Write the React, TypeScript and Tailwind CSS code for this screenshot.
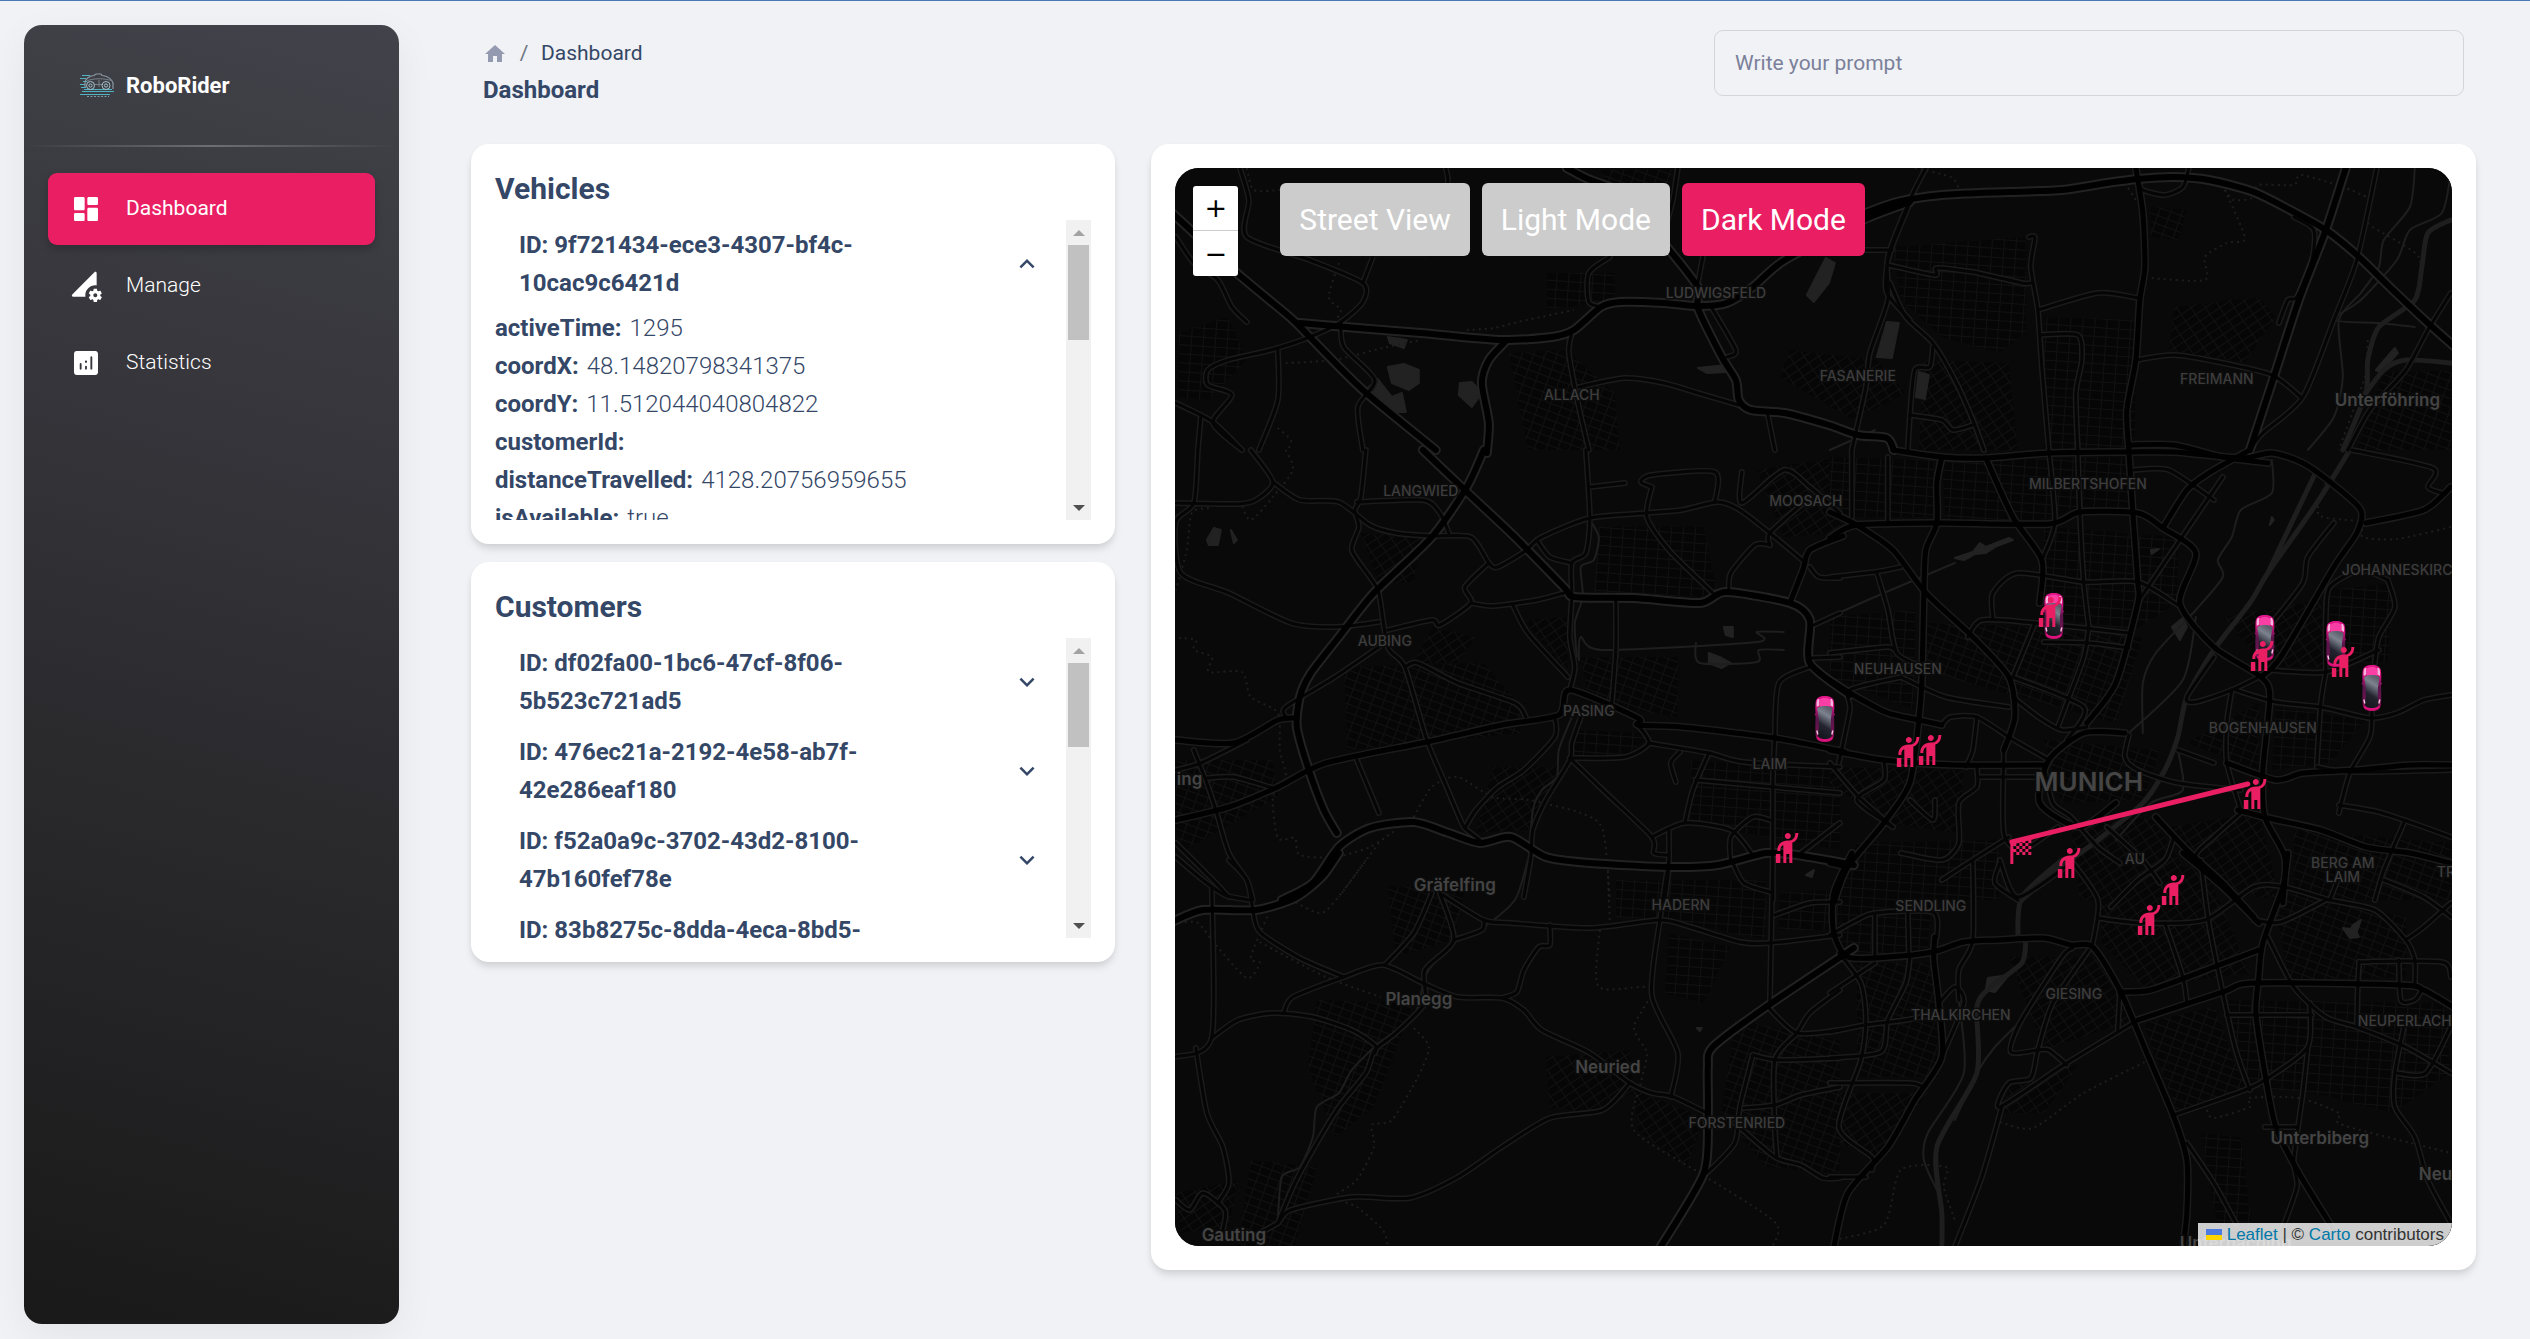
import React, { useState } from "react";
import { MdExpandLess, MdExpandMore, MdHail, MdHome, MdSportsScore } from "react-icons/md";

/* ------------------------------------------------------------------ */
/* Map geometry                                                        */
/* ------------------------------------------------------------------ */

type TileKey = "nw" | "ne" | "w" | "e" | "sw" | "se";
type Line = [TileKey, string];

const TILES: Record<TileKey, { x: number; y: number; kx: number; ky: number }> = {
  nw: { x: 1150, y: 0, kx: 760 / 1568, ky: 1 / 3 },
  ne: { x: 1830, y: 0, kx: 700 / 1568, ky: 1 / 3 },
  w: { x: 1150, y: 450, kx: 690 / 1568, ky: 1 / 3 },
  e: { x: 1830, y: 450, kx: 700 / 1568, ky: 1 / 3 },
  sw: { x: 1150, y: 860, kx: 690 / 1568, ky: 1 / 3 },
  se: { x: 1830, y: 860, kx: 700 / 1568, ky: 1 / 3 },
};

function project([key, points]: Line): number[][] {
  const t = TILES[key];
  return points.split(" ").map((pair) => {
    const [x, y] = pair.split(",").map(Number);
    return [Math.round(t.x + x * t.kx), Math.round(t.y + y * t.ky)];
  });
}

function smooth(line: Line): string {
  const p = project(line);
  let d = `M${p[0][0]} ${p[0][1]}`;
  for (let i = 0; i < p.length - 1; i++) {
    const a = p[Math.max(i - 1, 0)];
    const b = p[i];
    const c = p[i + 1];
    const e = p[Math.min(i + 2, p.length - 1)];
    const k = 8;
    d += `C${b[0] + (c[0] - a[0]) / k} ${b[1] + (c[1] - a[1]) / k} ${c[0] - (e[0] - b[0]) / k} ${
      c[1] - (e[1] - b[1]) / k
    } ${c[0]} ${c[1]}`;
  }
  return d;
}

const MOTORWAYS: Line[] = [
  ["nw", "40,630 90,700 180,820 290,955 330,1010 440,1170 590,1350"],
  ["w", "620,0 718,122 830,260 940,410 965,442 1100,445 1250,460 1310,425 1455,460 1500,510 1500,640 1590,735"],
  ["nw", "310,970 430,985 560,1000 720,1020 830,1010 875,990 930,920 970,905 1060,908 1130,918 1190,910 1245,860 1310,780 1470,660 1568,605"],
  ["ne", "80,640 150,605 250,585 400,575 520,570 620,550 690,538 770,530 850,540 950,575 1040,635 1110,690 1180,765 1260,870 1340,970 1400,1040"],
  ["nw", "735,1022 700,1080 685,1150 700,1270 695,1360"],
  ["w", "760,0 720,110 640,260 510,430 430,560 365,670 340,740 335,830 360,950 395,1080 425,1150"],
  ["w", "300,1350 370,1300 430,1190 500,1135 600,1115 680,1150 750,1180 820,1160 900,1220 1000,1240 1180,1250 1290,1245 1400,1210 1470,1215 1600,1245"],
  ["sw", "50,185 120,150 240,150 330,115 390,50 430,-20"],
  ["sw", "1600,265 1400,440 1280,560 1268,620 1268,760 1260,940 1160,1165"],
  ["nw", "1060,730 1130,860 1130,925 1180,1070 1210,1140 1215,1200 1240,1230 1310,1240 1400,1275 1460,1305 1520,1315 1535,1350"],
  ["ne", "1155,504 1110,690 1050,900 995,1130 940,1350"],
  ["nw", "860,504 900,535 950,560"],
];

const TRUNKS: Line[] = [
  ["w", "1455,460 1485,360 1500,300 1575,258"],
  ["e", "0,265 60,225 250,220 490,222 560,185 690,190 745,235 820,310 785,460 860,590 965,680 985,740 970,960 975,1100 1020,1220 1015,1360"],
  ["e", "140,0 250,20 350,25 490,10 670,5 770,5 920,25 990,10 1060,40 1130,105 1190,180 1180,250 1130,350 1010,620 965,680"],
  ["e", "745,235 800,120 850,70 940,0"],
  ["e", "0,690 60,740 130,790 200,810 250,825"],
  ["e", "250,20 240,100 240,220 215,300 210,430 205,700 200,810 180,1000 120,1120 40,1250 10,1360"],
  ["e", "890,940 1000,990 1060,970 1180,960 1300,945 1392,945"],
  ["e", "0,185 60,225 140,300 215,430 320,560 400,680 415,800 390,900"],
  ["e", "350,25 410,200 475,330 470,460"],
  ["e", "915,1080 980,1105 1100,1140 1200,1190 1300,1210 1392,1240"],
  ["e", "730,1100 800,1200 880,1300 950,1400"],
  ["e", "640,1060 560,1130 470,1060 490,930 570,850 660,850"],
  ["e", "0,900 120,930 280,945 480,945"],
  ["e", "1200,220 1330,180 1392,110"],
  ["e", "0,1240 40,1250"],
  ["se", "50,-20 10,100 10,220 40,290 130,290 230,275 300,245 380,240 480,235 540,255 590,260 650,390 710,580 770,770 800,900 800,1060 790,1165"],
  ["se", "1025,-20 1015,80 970,250 960,350 955,460 975,640 1000,800 1050,940 1130,1110"],
  ["se", "650,395 720,390 860,320 960,270"],
  ["se", "1400,445 1330,390 1280,375 950,370 880,395 690,480"],
  ["se", "235,230 232,300 245,430 250,590 190,720 130,860 40,1000 10,1160"],
  ["se", "790,-20 880,80 960,190"],
  ["w", "60,870 190,880 290,810 335,805"],
  ["w", "60,1110 180,1070 290,1010 400,940 630,875 800,825 930,795 955,720 1110,805 1110,825 1210,830 1420,865 1580,905"],
  ["ne", "685,504 700,640 705,800 695,900 685,1080 665,1230 670,1350"],
  ["e", "670,0 678,190 690,400 690,460 640,700 575,820"],
  ["ne", "670,1335 770,1335 880,1370 980,1390"],
];

const STREETS: Line[] = [
  ["nw", "185,504 205,600 200,710 330,780 440,850 440,905 395,965 330,1010 250,1050 160,1080 120,1110 120,1155 170,1185 130,1270 190,1350"],
  ["nw", "53,710 90,790 140,840 170,920 200,965"],
  ["nw", "460,770 440,850"],
  ["nw", "395,965 400,1040 465,1140 430,1220 440,1350"],
  ["nw", "265,1050 265,1200 225,1350"],
  ["nw", "1090,504 1080,600 1060,700"],
  ["nw", "950,770 905,820 905,905 935,920"],
  ["nw", "870,1000 865,1060 885,1220 905,1350"],
  ["nw", "885,1160 980,1135 1060,1150 1130,1180 1215,1215"],
  ["nw", "1160,925 1210,1050 1190,1070"],
  ["nw", "1140,770 1130,850"],
  ["nw", "1568,610 1530,740 1520,800 1520,880 1568,960"],
  ["nw", "1440,750 1530,750"],
  ["nw", "53,1210 130,1265 190,1350"],
  ["nw", "105,1250 100,1350"],
  ["nw", "1275,1245 1290,1350"],
  ["nw", "610,504 612,555 560,600"],
  ["ne", "215,504 180,600 130,770 130,900 90,1060 80,1160 50,1350"],
  ["ne", "130,795 235,825 240,805 320,815 430,850 450,850"],
  ["ne", "135,850 170,950 230,1030 280,1140 320,1260 345,1350"],
  ["ne", "445,710 460,715 450,800 465,930 475,1100 490,1350"],
  ["ne", "465,930 600,880 690,895"],
  ["ne", "470,1005 555,1005 565,1080 550,1180 555,1350"],
  ["ne", "685,1080 770,1065 870,1085 990,1125 1055,1190"],
  ["ne", "690,545 700,570 750,585 790,560 805,504"],
  ["ne", "1225,504 1180,780 1130,960 1060,1190 970,1300 940,1350"],
  ["ne", "1040,650 1085,690 1080,780 1045,890 1025,900 1005,970"],
  ["ne", "230,1040 225,1100 190,1110 180,1250 175,1350"],
  ["ne", "180,1245 250,1260 275,1290 320,1275"],
  ["ne", "1392,880 1340,990 1290,1110 1210,1230 1160,1350"],
  ["w", "230,0 280,95 240,150 200,162 60,160"],
  ["w", "280,95 340,150 430,155 500,225 560,250 640,258 730,260 770,340 790,350 850,305 890,260 1000,205 1130,190 1210,180 1290,155 1340,180 1420,260 1490,340"],
  ["w", "110,0 100,160 60,215 70,370 180,430 320,520 420,530 520,515"],
  ["w", "490,0 480,140 465,180 475,230 460,300 500,380 520,430 540,590 580,650 630,870 670,1000 710,1120 720,1140 760,1180"],
  ["w", "470,155 620,150 660,190 680,250"],
  ["w", "540,540 640,510 660,525 730,460 715,410 770,340"],
  ["w", "730,460 780,467 880,450 940,430"],
  ["w", "990,0 1000,200 990,310 960,340 960,440 955,560 965,650 955,720"],
  ["w", "880,270 910,320 960,340"],
  ["w", "1000,110 1080,98"],
  ["w", "1140,110 1115,95 1140,75 1285,65 1285,155"],
  ["w", "1140,110 1130,200 1180,300 1280,430"],
  ["w", "1345,65 1345,160 1440,60 1500,110 1568,190"],
  ["w", "1410,285 1375,285 1320,370 1315,425"],
  ["w", "1480,165 1410,250 1410,285"],
  ["w", "825,465 860,550 950,680"],
  ["w", "1060,445 1060,600 1050,760"],
  ["w", "580,650 610,640 700,700 830,760 855,800"],
  ["w", "520,590 420,680 310,770 310,800"],
  ["w", "470,930 520,1090"],
  ["w", "100,900 130,1000 150,1080 180,1210 220,1290 235,1350"],
  ["w", "130,985 190,980 280,1015"],
  ["w", "60,960 115,940 220,870"],
  ["w", "920,800 920,860 850,960 790,1010 740,1080 715,1135"],
  ["w", "980,800 960,880 955,930 900,1050 870,1140 865,1220 850,1340"],
  ["w", "955,925 1080,920 1135,880 1110,825"],
  ["w", "1135,880 1270,910 1350,935 1568,950"],
  ["w", "955,925 1030,1020 1140,1160 1145,1210 1180,1215"],
  ["w", "1140,1160 1215,1120 1320,1140 1370,1215"],
  ["w", "1270,910 1235,1020 1215,1120"],
  ["w", "1205,905 1185,940 1195,995"],
  ["w", "1240,990 1568,1030"],
  ["w", "1420,865 1415,1000 1415,1350"],
  ["w", "1500,650 1430,700 1420,865"],
  ["w", "1180,1140 1180,1250 1170,1350"],
  ["w", "1320,1240 1320,1160 1370,1100 1410,1110"],
  ["w", "1325,1240 1350,1300 1410,1325"],
  ["w", "60,1180 150,1300 180,1340"],
  ["w", "1480,1210 1568,1120"],
  ["w", "1500,350 1520,380 1568,385"],
  ["w", "1510,525 1568,490"],
  ["w", "1505,625 1568,622"],
  ["e", "50,0 50,200"],
  ["e", "130,20 130,215"],
  ["e", "490,0 505,215 475,330"],
  ["e", "555,0 560,190 570,400 580,530"],
  ["e", "1430,0 1430,60"],
  ["e", "0,380 100,365 160,350"],
  ["e", "105,370 130,480 150,610 210,650"],
  ["e", "0,610 130,590 150,610"],
  ["e", "365,505 365,430 420,370 570,395 690,395 780,465"],
  ["e", "310,560 340,510 460,520 670,550"],
  ["e", "460,520 410,680"],
  ["e", "580,530 570,620 530,760 510,830"],
  ["e", "480,575 580,580 670,595"],
  ["e", "160,680 45,720 45,780 20,940"],
  ["e", "160,680 260,740 400,770"],
  ["e", "410,680 570,770 530,870"],
  ["e", "410,740 470,805 520,840 575,830"],
  ["e", "250,825 270,800 330,800 400,860 490,930"],
  ["e", "330,800 320,900 305,950"],
  ["e", "335,980 480,980"],
  ["e", "330,950 330,1010 290,1060 290,1180 250,1230 160,1210"],
  ["e", "120,930 120,990 60,1050 140,1130"],
  ["e", "0,940 65,1040 140,1130"],
  ["e", "235,1050 230,1110 180,1050"],
  ["e", "390,900 390,1150 430,1200 510,1130"],
  ["e", "480,945 500,1060 540,1100 600,1190 650,1240"],
  ["e", "670,855 660,920 690,960 780,1000 920,1020"],
  ["e", "690,455 780,280 880,80"],
  ["e", "680,60 760,60 860,150"],
  ["e", "780,900 860,940"],
  ["e", "860,620 800,740 820,755 900,720 960,680"],
  ["e", "900,720 890,820 890,940 920,1080"],
  ["e", "910,720 1000,755 1100,770 1210,805 1270,790 1330,750 1392,735"],
  ["e", "985,660 1110,665 1230,600"],
  ["e", "1110,665 1100,760 1090,940"],
  ["e", "1130,220 1070,320 1060,400 990,520"],
  ["e", "1250,390 1265,470 1230,560 1220,640"],
  ["e", "1250,390 1190,360 1120,410 1110,500 1110,665"],
  ["e", "1215,785 1210,860 1165,970 1140,1090"],
  ["e", "1392,960 1170,965 1090,950"],
  ["e", "1170,0 1350,55 1340,110 1370,130"],
  ["e", "920,1090 860,1160 820,1220 880,1300"],
  ["e", "1140,1065 1230,1085 1330,1130 1392,1160"],
  ["e", "1285,1120 1240,1260 1220,1350"],
  ["e", "770,1160 750,1230 690,1290 630,1370"],
  ["e", "620,1130 700,1230 740,1300"],
  ["e", "380,1240 370,1300 420,1350"],
  ["e", "250,1290 310,1240 400,1160"],
  ["se", "0,225 60,180 100,160 230,155 240,230"],
  ["se", "100,165 100,290"],
  ["se", "175,155 178,285"],
  ["se", "320,0 320,240 290,330 290,420"],
  ["se", "20,280 70,370 80,480 70,600 20,800 95,890 95,930"],
  ["se", "0,400 100,310"],
  ["se", "180,290 170,370 130,480 115,575 0,595"],
  ["se", "0,515 80,495 170,480 250,460"],
  ["se", "0,670 180,670 210,685"],
  ["se", "0,950 80,950"],
  ["se", "245,430 280,380 300,430 250,590"],
  ["se", "380,0 420,110 540,10"],
  ["se", "540,0 600,120 590,250"],
  ["se", "600,175 700,190 840,180 950,80 1020,80 1120,120 1220,150 1290,240 1310,300 1310,380"],
  ["se", "750,190 790,350 800,430"],
  ["se", "830,0 850,190 880,400 910,570 940,690"],
  ["se", "950,180 1010,185 1110,120"],
  ["se", "980,230 1040,380 1110,470 1180,500 1290,560 1392,640"],
  ["se", "890,465 1080,465"],
  ["se", "1180,500 1185,320 1200,305 1370,305 1392,350"],
  ["se", "1275,300 1280,420 1310,420 1325,390"],
  ["se", "1290,240 1330,200 1392,130"],
  ["se", "1240,60 1330,110 1392,170"],
  ["se", "1140,50 1120,120"],
  ["se", "1075,430 1070,560 985,650 930,690 770,765"],
  ["se", "1070,560 1060,700 1040,900 1045,980 1010,1120"],
  ["se", "975,800 1045,800"],
  ["se", "1285,500 1265,640 1265,740 1310,830 1340,960 1392,1090"],
  ["se", "1270,640 1335,640 1392,500"],
  ["se", "690,480 530,610 380,740 400,670 450,655 465,570 500,430 580,270"],
  ["se", "465,570 405,575 425,490 520,290 545,265"],
  ["se", "465,570 490,570 530,615"],
  ["se", "650,400 645,510"],
  ["se", "385,740 340,950 280,1160"],
  ["se", "800,850 860,970 910,1090"],
  ["sw", "140,80 140,530 60,590"],
  ["sw", "140,535 200,480 280,458 370,470 460,510 512,555 512,580"],
  ["sw", "105,565 130,760 165,860 180,970 155,1030"],
  ["sw", "305,460 325,410 440,350 530,315 620,370 700,410 800,415 850,450 890,510 1000,580 1090,670 1140,700 1190,710 1265,760"],
  ["sw", "235,150 250,215 340,295 440,350"],
  ["sw", "180,0 220,60 235,150"],
  ["sw", "660,100 690,240 625,330 625,430 560,520 512,570 490,640 430,740 380,850 330,970 290,1090"],
  ["sw", "640,100 600,220 535,315"],
  ["sw", "665,105 760,180 820,190 1000,205 1160,180 1230,200 1340,245 1410,250 1568,225"],
  ["sw", "910,195 910,255 885,260 850,330 835,395 800,415"],
  ["sw", "760,180 755,210 690,240"],
  ["sw", "1180,0 1160,180 1140,405 1200,580 1185,710"],
  ["sw", "1415,0 1410,430"],
  ["sw", "1405,440 1470,520 1568,510"],
  ["sw", "1568,390 1500,460 1470,520 1420,600 1420,800 1425,890"],
  ["sw", "1370,585 1430,600 1568,595"],
  ["sw", "1370,585 1340,740 1330,850 1265,940"],
  ["sw", "1350,745 1420,735 1480,705 1568,680"],
  ["sw", "1330,790 1420,890 1480,915 1530,955 1568,955"],
  ["sw", "1420,165 1500,130 1568,125"],
  ["sw", "1090,670 1030,750 910,775 800,860 700,950 590,1015 460,1010 320,1050 290,1090 250,1120"],
  ["sw", "60,1020 90,1050 120,1000 170,1050 165,1110"],
  ["sw", "60,-10 120,60 170,105 225,120"],
];

const RIVERS: Line[] = [
  ["e", "1165,0 1090,160 980,370 940,460 860,600 800,740 780,860 750,960 700,1060 600,1170 500,1270 430,1350"],
  ["e", "1090,60 1020,260 980,370"],
  ["ne", "1392,660 1340,700 1325,800 1310,900 1230,980 1205,1080 1200,1180 1150,1350"],
  ["ne", "1392,1090 1290,1080 1240,1110 1190,1200"],
  ["se", "520,0 430,110 420,230"],
  ["se", "440,240 430,310 360,380 330,440 330,640 240,860 250,1060 250,1160"],
];

const STREAMS: Line[] = [
  ["ne", "1310,504 1300,620 1240,720 1230,800 1190,880 1140,960 1150,1130 1130,1250 1070,1350"],
  ["ne", "1392,520 1370,640 1300,690 1270,780 1190,900 1130,960 1230,970 1310,980"],
  ["e", "990,30 990,130 920,180 900,260 870,330 880,380 820,480 730,610 700,700 700,850"],
  ["e", "780,900 790,1020 720,1060 640,1170"],
  ["e", "820,500 790,690 670,850"],
  ["w", "1000,210 1020,260 1010,330 980,350 985,440 965,520 970,620"],
  ["w", "975,630 980,560 1030,600 1380,575 1380,545 1440,545"],
  ["w", "1240,580 1250,640 1380,635 1385,600 1440,600"],
  ["w", "960,800 930,900 925,980 890,1020 870,1080 860,1250 850,1340"],
  ["sw", "860,0 830,120 750,210 690,250 630,340 600,470 520,550 460,630 430,700 380,740 370,830 340,920 300,950 290,1080"],
  ["se", "290,420 300,640 220,820 210,900 240,990"],
  ["se", "430,480 370,560 330,640 280,780"],
  ["ne", "0,1350 100,1290"],
  ["e", "0,500 120,430 280,340"],
];

const BORDERS: Line[] = [
  ["nw", "200,504 215,570 268,570"],
  ["nw", "390,790 370,890 395,930 380,970"],
  ["nw", "280,1090 380,1080 480,1045 560,1020"],
  ["nw", "655,990 710,985 760,965 875,930"],
  ["nw", "265,1285 290,1320 285,1350"],
  ["ne", "660,550 685,600"],
  ["ne", "885,570 930,715 890,730 840,770 840,840 715,835"],
  ["ne", "885,570 905,600 945,595 960,555 1040,555 1060,525 1200,590 1205,670 1320,770 1310,900"],
  ["ne", "1205,1020 1200,1120 1180,1200 1140,1350"],
  ["ne", "190,504 270,530 290,565"],
  ["e", "1110,100 1095,195 1190,215 1195,260 1270,268 1392,232"],
  ["w", "310,0 325,60 280,140 230,210 210,165"],
  ["w", "135,175 95,190 85,300 60,420"],
  ["w", "65,565 105,570 100,600 140,620 135,665 210,665 230,740 290,790 295,900 310,980 280,1040 290,1165 330,1165 340,1215 420,1220 500,1190 560,1140"],
  ["w", "600,1100 640,1010 700,980 780,1040 860,1050 980,1090 1030,1140 1045,1350"],
  ["w", "520,1180 430,1340"],
  ["sw", "490,0 440,90 390,158 330,125"],
  ["sw", "65,190 110,190 150,255 220,355 250,310 230,290 270,160"],
  ["sw", "250,245 400,350 525,410"],
  ["sw", "600,505 635,560 610,650 550,780 505,795 510,860 470,960 420,1010 470,1040 530,1110 540,1157"],
  ["sw", "1040,30 1045,195"],
  ["sw", "1022,210 1020,380 1140,385 1100,500 1130,580 1115,670 1100,810 1250,940 1420,1085 1415,1157"],
  ["se", "380,785 455,805 570,700 705,605"],
  ["se", "845,750 860,775 940,740 940,715 1050,715 1140,760 1150,795 1392,880"],
  ["se", "10,1140 120,1095 160,930 260,920 255,980 280,1080"],
];

const LAKES: Line[] = [
  ["nw", "492,1100 525,1093 555,1110 555,1150 535,1170 520,1162 500,1150"],
  ["nw", "470,1138 500,1190 520,1180 528,1235 500,1235 450,1165"],
  ["nw", "640,1150 665,1145 685,1180 665,1220 638,1185"],
  ["nw", "490,1012 530,1020 525,1045 495,1030"],
  ["nw", "1395,775 1413,790 1400,850 1370,905 1355,885"],
  ["nw", "1520,965 1545,970 1530,1075 1500,1070"],
  ["nw", "1130,1105 1190,1095 1190,1115 1150,1118"],
  ["ne", "200,1115 222,1125 213,1198 192,1190"],
  ["ne", "1222,1110 1265,1045 1272,1060 1235,1115"],
  ["w", "130,270 145,235 162,240 155,285 135,285"],
  ["w", "185,240 198,270 190,280"],
  ["w", "1305,530 1325,530 1325,560 1310,555"],
  ["w", "1270,610 1300,625 1320,640 1300,655 1270,640"],
  ["e", "280,325 320,305 335,280 350,290 400,265 410,270 375,288 350,308 325,312 300,330"],
  ["e", "765,530 790,505 800,530 785,570"],
  ["e", "720,300 738,298 722,312"],
  ["e", "990,200 995,210 985,225"],
  ["se", "1150,205 1168,208 1172,195 1190,180 1180,215 1185,230 1165,235"],
  ["se", "355,355 400,345 370,395 350,390"],
  ["sw", "1490,45 1510,30 1505,52"],
  ["sw", "1242,505 1255,503 1250,513"],
];

type Block = [TileKey, string, number];
const BLOCKS: Block[] = [
  ["nw", "60,1000 160,950 200,1080 120,1200 60,1190", 0],
  ["nw", "740,1060 860,1050 960,1180 970,1350 780,1350", 1],
  ["nw", "820,820 960,820 960,900 820,930", 0],
  ["nw", "930,510 1080,510 1060,620 960,600", 1],
  ["nw", "1320,1050 1500,1080 1560,1180 1450,1260 1300,1130", 2],
  ["ne", "140,740 440,710 440,1000 380,1060 250,1010 160,900", 0],
  ["ne", "720,620 800,630 780,720 720,710", 1],
  ["ne", "480,950 690,960 680,1350 480,1350", 0],
  ["ne", "770,920 960,890 1000,950 930,1090 760,1050", 2],
  ["ne", "210,1080 400,1090 420,1350 200,1350", 2],
  ["ne", "1240,1120 1392,1110 1392,1350 1180,1350", 1],
  ["w", "480,250 620,260 600,400 520,400", 2],
  ["w", "440,650 760,640 850,780 840,850 450,900", 1],
  ["w", "640,530 740,560 700,640 600,640", 2],
  ["w", "1020,230 1260,230 1290,440 1010,430", 0],
  ["w", "850,510 950,500 950,670", 2],
  ["w", "980,620 1200,620 1200,800 1000,760", 1],
  ["w", "60,930 280,930 290,1040 80,1200 60,1150", 1],
  ["w", "780,950 930,950 860,1140 740,1150", 2],
  ["w", "1230,930 1568,960 1568,1200 1230,1120", 0],
  ["w", "960,840 1140,850 1080,920 960,920", 0],
  ["w", "1380,60 1568,20 1568,250 1440,260", 2],
  ["e", "0,20 230,30 230,200 0,200", 0],
  ["e", "250,30 660,20 680,180 540,180 470,210 260,210", 0],
  ["e", "480,230 780,260 780,460 680,540 480,500", 0],
  ["e", "220,520 460,530 420,740 210,660", 1],
  ["e", "420,540 700,560 640,820 430,740", 1],
  ["e", "0,500 190,480 190,780 0,680", 0],
  ["e", "0,950 300,960 290,1150 120,1120 0,1000", 2],
  ["e", "480,870 740,900 700,1050 520,1060", 1],
  ["e", "880,500 1100,450 1110,650 980,650", 2],
  ["e", "1120,420 1260,400 1250,640 1120,640", 0],
  ["e", "800,880 960,760 960,960", 1],
  ["e", "1000,770 1200,810 1120,940 990,960", 0],
  ["e", "60,1180 380,1170 380,1350 20,1350", 0],
  ["e", "540,1130 720,1100 840,1350 560,1350", 2],
  ["e", "760,1130 960,1090 1010,1350 900,1330", 2],
  ["e", "1040,1140 1392,1180 1392,1350 1040,1350", 1],
  ["se", "20,20 230,20 220,280 30,280", 0],
  ["se", "600,20 840,20 940,340 700,380 610,250", 2],
  ["se", "400,290 620,290 680,480 480,570", 2],
  ["se", "990,100 1290,170 1290,350 1030,360", 1],
  ["se", "880,420 1380,430 1392,640 1260,760 1080,700 940,680", 0],
  ["se", "700,490 860,440 930,680 780,760", 1],
  ["se", "60,310 240,310 240,650 60,650", 1],
  ["se", "20,700 220,700 100,890 20,850", 2],
  ["se", "400,680 560,610 480,760 390,760", 2],
  ["se", "830,820 920,830 950,1150 870,1100", 0],
  ["sw", "540,80 720,60 690,240 560,290", 1],
  ["sw", "380,420 600,430 510,740 420,830 360,620", 1],
  ["sw", "900,590 1090,570 1100,700 1000,760 910,740", 2],
  ["sw", "1060,60 1400,60 1400,240 1180,180 1060,170", 0],
  ["sw", "1180,220 1320,260 1260,430 1170,400", 0],
  ["sw", "1330,480 1568,540 1568,940 1400,920 1300,760", 1],
  ["sw", "230,900 380,920 330,1157 200,1157", 1],
  ["sw", "60,1000 200,960 180,1100 70,1120", 2],
  ["sw", "1100,690 1260,770 1220,920 1110,810", 2],
  ["sw", "1430,100 1568,90 1568,210 1430,210", 0],
];

type Label = { text: string; x: number; y: number; kind: "district" | "town" | "city"; start?: boolean };
const LABELS: Label[] = [
  { text: "LOCHHAUSEN", x: 1378, y: 250, kind: "district" },
  { text: "LUDWIGSFELD", x: 1716, y: 292, kind: "district" },
  { text: "FASANERIE", x: 1858, y: 375, kind: "district" },
  { text: "ALLACH", x: 1572, y: 394, kind: "district" },
  { text: "FREIMANN", x: 2217, y: 378, kind: "district" },
  { text: "Unterföhring", x: 2335, y: 400, kind: "town", start: true },
  { text: "LANGWIED", x: 1421, y: 490, kind: "district" },
  { text: "MOOSACH", x: 1806, y: 500, kind: "district" },
  { text: "MILBERTSHOFEN", x: 2088, y: 483, kind: "district" },
  { text: "JOHANNESKIRCHEN", x: 2342, y: 569, kind: "district", start: true },
  { text: "AUBING", x: 1385, y: 640, kind: "district" },
  { text: "NEUHAUSEN", x: 1898, y: 668, kind: "district" },
  { text: "PASING", x: 1589, y: 710, kind: "district" },
  { text: "BOGENHAUSEN", x: 2263, y: 727, kind: "district" },
  { text: "LAIM", x: 1770, y: 763, kind: "district" },
  { text: "ing", x: 1177, y: 779, kind: "town", start: true },
  { text: "MUNICH", x: 2089, y: 781, kind: "city" },
  { text: "AU", x: 2135, y: 858, kind: "district" },
  { text: "BERG AM", x: 2343, y: 862, kind: "district" },
  { text: "LAIM", x: 2343, y: 876, kind: "district" },
  { text: "TRUDERING", x: 2437, y: 871, kind: "district", start: true },
  { text: "Gräfelfing", x: 1455, y: 885, kind: "town" },
  { text: "HADERN", x: 1681, y: 904, kind: "district" },
  { text: "SENDLING", x: 1931, y: 905, kind: "district" },
  { text: "GIESING", x: 2074, y: 993, kind: "district" },
  { text: "Planegg", x: 1419, y: 999, kind: "town" },
  { text: "THALKIRCHEN", x: 1961, y: 1014, kind: "district" },
  { text: "NEUPERLACH", x: 2358, y: 1020, kind: "district", start: true },
  { text: "Neuried", x: 1608, y: 1067, kind: "town" },
  { text: "FORSTENRIED", x: 1737, y: 1122, kind: "district" },
  { text: "Unterbiberg", x: 2320, y: 1138, kind: "town" },
  { text: "Neubiberg", x: 2419, y: 1174, kind: "town", start: true },
  { text: "Gauting", x: 1234, y: 1235, kind: "town" },
  { text: "Unterhaching", x: 2180, y: 1243, kind: "town", start: true },
];

const LABEL_STYLE = {
  district: "fill-[#3d3d3d] text-[14px] font-medium",
  town: "fill-[#444444] text-[17px] font-semibold",
  city: "fill-[#454545] text-[26px] font-semibold",
};

const CARS = [
  [2054, 616],
  [2265, 638],
  [2336, 644],
  [2372, 688],
  [1825, 719],
];

const PEOPLE = [
  [2033, 594],
  [2245, 638],
  [2326, 644],
  [2238, 776],
  [1891, 734],
  [1913, 732],
  [1770, 830],
  [2052, 845],
  [2132, 902],
  [2156, 872],
];

function Car({ x, y }: { x: number; y: number }) {
  return (
    <g transform={`translate(${x - 11} ${y - 23})`}>
      <path d="M1 18.500h2M19 18.500h2" stroke="#b3167a" strokeWidth="1.600" />
      <path
        d="M11 0C16 0 19 1.500 20 5c.8 4 .4 9 .2 14 .2 7 .6 15-.2 21-.8 4.500-4 6-9 6s-8.200-1.500-9-6c-.8-6-.4-14-.2-21C1.600 14 1.200 9 2 5 3 1.500 6 0 11 0z"
        fill="url(#carBody)"
      />
      <path d="M4 3C2.500 5 2.500 8 3 11L5.500 9.500V3zM18 3c1.500 2 1.500 5 1 8l-2.500-1.500V3z" fill="#f6b6dc" />
      <path d="M11 2c4 0 5.500 1 5.500 4l-.5 5H6l-.5-5C5.500 3 7 2 11 2z" fill="#f93fa6" />
      <path d="M11 10c5 0 7.600 1.400 7.600 3L17 23v9l1 7c-.5 3-3 4-7 4s-6.500-1-7-4l1-7v-9L3.400 13c0-1.600 2.600-3 7.600-3z" fill="url(#carGlass)" />
      <path d="M3 34.500l1 4M19 34.500l-1 4" stroke="#f7c4e2" strokeWidth="1.400" />
      <path d="M3.500 41.500C6 45 16 45 18.500 41.500" fill="none" stroke="#e0127f" strokeWidth="2" />
    </g>
  );
}

function CityMap() {
  return (
    <svg
      className="absolute inset-0 h-full w-full"
      viewBox="1175 168 1277 1078"
      preserveAspectRatio="xMidYMid slice"
      role="img"
      aria-label="Map of Munich"
    >
      <defs>
        <pattern id="block0" width="12" height="9" patternUnits="userSpaceOnUse" patternTransform="rotate(4)">
          <rect width="12" height="9" fill="#060606" />
          <path d="M0 .5H12M.5 0V9" stroke="#111111" />
        </pattern>
        <pattern id="block1" width="11" height="8" patternUnits="userSpaceOnUse" patternTransform="rotate(20)">
          <rect width="11" height="8" fill="#060606" />
          <path d="M0 .5H11M.5 0V8" stroke="#111111" />
        </pattern>
        <pattern id="block2" width="12" height="8" patternUnits="userSpaceOnUse" patternTransform="rotate(-34)">
          <rect width="12" height="8" fill="#060606" />
          <path d="M0 .5H12M.5 0V8" stroke="#111111" />
        </pattern>
        <linearGradient id="carBody" x1="0" y1="0" x2="0" y2="1">
          <stop offset="0" stopColor="#e3178b" />
          <stop offset=".25" stopColor="#d0107c" />
          <stop offset=".5" stopColor="#57164a" />
          <stop offset=".8" stopColor="#6d1250" />
          <stop offset="1" stopColor="#c40e6c" />
        </linearGradient>
        <linearGradient id="carGlass" x1=".3" y1="1" x2=".6" y2="0">
          <stop offset="0" stopColor="#14141c" />
          <stop offset=".4" stopColor="#23242f" />
          <stop offset=".75" stopColor="#7d828f" />
          <stop offset="1" stopColor="#5a5d6a" />
        </linearGradient>
      </defs>
      <rect x="1175" y="168" width="1277" height="1078" fill="#090909" />
      <g>
        {BLOCKS.map(([key, points, kind], i) => (
          <polygon
            key={i}
            points={project([key, points]).join(" ")}
            fill={kind === 0 ? "url(#block0)" : kind === 1 ? "url(#block1)" : "url(#block2)"}
          />
        ))}
      </g>
      <g fill="#222222" stroke="#222222" strokeWidth="2" strokeLinejoin="round">
        {LAKES.map((l, i) => (
          <polygon key={i} points={project(l).join(" ")} />
        ))}
      </g>
      <g fill="none" stroke="#1e1e1e" strokeLinecap="round" strokeLinejoin="round">
        {RIVERS.map((l, i) => (
          <path key={i} d={smooth(l)} strokeWidth="5" />
        ))}
        {STREAMS.map((l, i) => (
          <path key={i} d={smooth(l)} strokeWidth="2" />
        ))}
        {BORDERS.map((l, i) => (
          <path key={i} d={smooth(l)} strokeWidth="2" strokeDasharray="2 4" strokeLinecap="butt" />
        ))}
      </g>
      <g fill="none" strokeLinecap="round" strokeLinejoin="round">
        {STREETS.map((l, i) => (
          <path key={i} d={smooth(l)} stroke="#1b1b1b" strokeWidth="6" />
        ))}
        {TRUNKS.map((l, i) => (
          <path key={i} d={smooth(l)} stroke="#1b1b1b" strokeWidth="8" />
        ))}
        {MOTORWAYS.map((l, i) => (
          <path key={i} d={smooth(l)} stroke="#222222" strokeWidth="10" />
        ))}
        {STREETS.map((l, i) => (
          <path key={i} d={smooth(l)} stroke="#050505" strokeWidth="3" />
        ))}
        {TRUNKS.map((l, i) => (
          <path key={i} d={smooth(l)} stroke="#010101" strokeWidth="5" />
        ))}
        {MOTORWAYS.map((l, i) => (
          <path key={i} d={smooth(l)} stroke="#010101" strokeWidth="6" />
        ))}
      </g>
      <g className="font-['Inter',sans-serif]" dominantBaseline="central">
        {LABELS.map((l, i) => (
          <text
            key={i}
            x={l.x}
            y={l.y}
            textAnchor={l.start ? "start" : "middle"}
            className={LABEL_STYLE[l.kind]}
            stroke="#0c0c0c"
            strokeWidth="3"
            paintOrder="stroke"
          >
            {l.text}
          </text>
        ))}
      </g>
      {CARS.map(([x, y]) => (
        <Car key={x} x={x} y={y} />
      ))}
      <path d="M2012 842L2248 784" stroke="#e91e63" strokeWidth="5" strokeLinecap="round" />
      {PEOPLE.map(([x, y]) => (
        <MdHail key={x} x={x} y={y} size={36} color="#e91e63" />
      ))}
      <MdSportsScore x={2003} y={834} size={36} color="#e91e63" />
    </svg>
  );
}

/* ------------------------------------------------------------------ */
/* Icons                                                               */
/* ------------------------------------------------------------------ */

function DashboardIcon() {
  return (
    <svg viewBox="0 0 24 24" className="size-8" fill="currentColor" aria-hidden="true">
      <path d="M4 13h6c.55 0 1-.45 1-1V4c0-.55-.45-1-1-1H4c-.55 0-1 .45-1 1v8c0 .55.45 1 1 1zm0 8h6c.55 0 1-.45 1-1v-4c0-.55-.45-1-1-1H4c-.55 0-1 .45-1 1v4c0 .55.45 1 1 1zm10 0h6c.55 0 1-.45 1-1v-8c0-.55-.45-1-1-1h-6c-.55 0-1 .45-1 1v8c0 .55.45 1 1 1zM13 4v4c0 .55.45 1 1 1h6c.55 0 1-.45 1-1V4c0-.55-.45-1-1-1h-6c-.55 0-1 .45-1 1z" />
    </svg>
  );
}

function ManageIcon() {
  return (
    <svg viewBox="0 0 24 24" className="size-8" fill="currentColor" aria-hidden="true">
      <path d="M18.990 11.500c.34 0 .67.03 1 .07V2.410c0-.89-1.080-1.340-1.710-.71L1.700 18.290c-.63.63-.19 1.710.7 1.710h9.160c-.04-.33-.07-.66-.07-1 0-4.140 3.360-7.500 7.500-7.500zm3.710 7.990c.02-.16.04-.32.04-.49s-.01-.33-.04-.49l1.060-.83c.09-.08.12-.21.06-.32l-1-1.730c-.06-.11-.19-.15-.31-.11l-1.240.5c-.26-.2-.54-.37-.85-.49l-.19-1.320c-.01-.12-.12-.21-.24-.21h-2c-.12 0-.23.09-.25.21l-.19 1.320c-.3.13-.59.29-.85.49l-1.240-.5c-.11-.04-.24 0-.31.11l-1 1.730c-.06.11-.04.24.06.32l1.060.83c-.02.16-.03.32-.03.49s.01.33.03.49l-1.060.83c-.09.08-.12.21-.06.32l1 1.730c.06.11.19.15.31.11l1.240-.5c.26.2.54.37.85.49l.19 1.320c.02.12.12.21.25.21h2c.12 0 .23-.09.24-.21l.19-1.320c.3-.13.59-.29.84-.49l1.250.5c.11.04.24 0 .31-.11l1-1.730c.06-.11.03-.24-.06-.32l-1.060-.83zm-3.710 1.010c-.83 0-1.500-.67-1.500-1.500s.67-1.500 1.500-1.500 1.500.67 1.500 1.500-.67 1.500-1.500 1.500z" />
    </svg>
  );
}

function StatisticsIcon() {
  return (
    <svg viewBox="0 0 24 24" className="size-8" fill="currentColor" aria-hidden="true">
      <path
        fillRule="evenodd"
        d="M19 3H5c-1.100 0-2 .9-2 2v14c0 1.100.9 2 2 2h14c1.100 0 2-.9 2-2V5c0-1.100-.9-2-2-2zM8 17c-.4 0-.7-.3-.7-.7v-3.600c0-.4.3-.7.7-.7s.7.300.7.700v3.600c0 .4-.3.700-.7.700zm4 0c-.4 0-.7-.3-.7-.7v-1.600c0-.4.3-.7.7-.7s.7.300.7.700v1.600c0 .4-.3.700-.7.700zm0-5c-.5 0-.8-.4-.8-.9s.3-.9.8-.9.8.400.8.900-.3.900-.8.900zm4 5c-.4 0-.7-.3-.7-.7V7.700c0-.4.3-.7.7-.7s.7.300.7.700v8.600c0 .4-.3.700-.7.700z"
      />
    </svg>
  );
}

function Logo() {
  return (
    <svg viewBox="0 0 34 24" className="h-6 w-[34px]" fill="none" aria-hidden="true">
      <g stroke="#4fb3c4" strokeWidth="1">
        <path d="M2 2.500h8M0 5.500h6M3 8.500h4M0 11.500h5M1 14.500h5M2 18.500h32M0 21.500h30M4 16.500h28" />
      </g>
      <path d="M5 14V10C5 6 9 3 14 2.500l2-1.500h5l1 1.500c6 .5 10 4 11 7.500v6" stroke="#8d9aa3" strokeWidth="1.200" />
      <path d="M7 8c5-3 19-3 25 0M14 11.500h9M19 7v7" stroke="#76828b" />
      <g stroke="#a3c3cb">
        <circle cx="10.500" cy="12.500" r="4" />
        <circle cx="10.500" cy="12.500" r="1.600" />
        <circle cx="26" cy="12.500" r="4" />
        <circle cx="26" cy="12.500" r="1.600" />
      </g>
      <path d="M7 23.500h22" stroke="#7c98a3" strokeDasharray="2 1.500" />
    </svg>
  );
}

/* ------------------------------------------------------------------ */
/* Sidebar                                                             */
/* ------------------------------------------------------------------ */

const NAV = [
  { label: "Dashboard", icon: DashboardIcon },
  { label: "Manage", icon: ManageIcon },
  { label: "Statistics", icon: StatisticsIcon },
];

function Sidebar() {
  return (
    <aside className="m-6 mr-0 h-[calc(100vh-40px)] w-[375px] shrink-0 rounded-[18px] bg-[linear-gradient(195deg,#42424a,#191919)] text-white shadow-[0_12px_40px_rgba(0,0,0,0.06)]">
      <a href="#home" className="flex h-[120px] items-center gap-3 pl-14 text-[22px] font-bold">
        <Logo />
        RoboRider
      </a>
      <div className="h-[2px] bg-linear-to-r from-transparent via-white/25 to-transparent" />
      <nav className="flex flex-col gap-[5px] px-6 pt-[26px]">
        {NAV.map(({ label, icon: Icon }, i) => (
          <a
            key={label}
            href={`#${label.toLowerCase()}`}
            aria-current={i === 0 ? "page" : undefined}
            className={
              i === 0
                ? "flex h-[72px] items-center gap-6 rounded-[9px] bg-[#e91e63] pl-[22px] text-[21px] shadow-[0_4px_8px_rgba(0,0,0,0.2)]"
                : "flex h-[72px] items-center gap-6 rounded-[9px] pl-[22px] text-[21px] font-light"
            }
          >
            <Icon />
            {label}
          </a>
        ))}
      </nav>
    </aside>
  );
}

/* ------------------------------------------------------------------ */
/* Lists                                                               */
/* ------------------------------------------------------------------ */

type Item = { id: string; details?: [string, string][] };

const VEHICLES: Item[] = [
  {
    id: "9f721434-ece3-4307-bf4c-10cac9c6421d",
    details: [
      ["activeTime", "1295"],
      ["coordX", "48.14820798341375"],
      ["coordY", "11.512044040804822"],
      ["customerId", ""],
      ["distanceTravelled", "4128.20756959655"],
      ["isAvailable", "true"],
    ],
  },
];

const CUSTOMERS: Item[] = [
  { id: "df02fa00-1bc6-47cf-8f06-5b523c721ad5" },
  { id: "476ec21a-2192-4e58-ab7f-42e286eaf180" },
  { id: "f52a0a9c-3702-43d2-8100-47b160fef78e" },
  { id: "83b8275c-8dda-4eca-8bd5-2f1c7d90a64b" },
];

function ScrollTrack({ thumb }: { thumb: string }) {
  return (
    <div className="flex w-[25px] shrink-0 flex-col items-center bg-[#f1f1f1]" aria-hidden="true">
      <div className="flex h-[25px] items-center">
        <svg viewBox="0 0 12 6" className="h-[6px] w-3 fill-[#a3a3a3]">
          <path d="M6 0l6 6H0z" />
        </svg>
      </div>
      <div className="w-full flex-1 px-[2px]">
        <div className={thumb} />
      </div>
      <div className="flex h-[25px] items-center">
        <svg viewBox="0 0 12 6" className="h-[6px] w-3 fill-[#505050]">
          <path d="M0 0h12L6 6z" />
        </svg>
      </div>
    </div>
  );
}

function ListCard({ title, items, thumb }: { title: string; items: Item[]; thumb: string }) {
  return (
    <section className="rounded-[18px] bg-white p-6 shadow-[0_6px_9px_-1px_rgba(0,0,0,0.1),0_3px_6px_-1px_rgba(0,0,0,0.06)]">
      <h2 className="h-[52px] text-[30px] leading-[42px] font-bold">{title}</h2>
      <div className="flex h-[300px]">
        <div className="min-w-0 flex-1 overflow-hidden">
          {items.map((item) => (
            <div key={item.id}>
              <button
                type="button"
                aria-expanded={Boolean(item.details)}
                className="mb-px flex w-full items-center px-6 py-[6px] text-left text-[24px] leading-[38px] font-bold"
              >
                <span className="min-w-0 flex-1 pr-3">{`ID: ${item.id}`}</span>
                {item.details ? <MdExpandLess size={30} /> : <MdExpandMore size={30} />}
              </button>
              {item.details && (
                <dl className="text-[24px] leading-[38px]">
                  {item.details.map(([key, value]) => (
                    <div key={key} className="flex gap-2">
                      <dt className="font-bold">{`${key}:`}</dt>
                      <dd className="font-light">{value}</dd>
                    </div>
                  ))}
                </dl>
              )}
            </div>
          ))}
        </div>
        <ScrollTrack thumb={thumb} />
      </div>
    </section>
  );
}

/* ------------------------------------------------------------------ */
/* Map card                                                            */
/* ------------------------------------------------------------------ */

const MODES = ["Street View", "Light Mode", "Dark Mode"];

function MapCard() {
  const [mode, setMode] = useState("Dark Mode");
  return (
    <section className="rounded-[18px] bg-white p-6 shadow-[0_6px_9px_-1px_rgba(0,0,0,0.1),0_3px_6px_-1px_rgba(0,0,0,0.06)]">
      <div className="relative h-[calc(100vh-261px)] overflow-hidden rounded-[24px] bg-[#090909]">
        <CityMap />
        <div className="absolute top-[18px] left-[18px] flex w-[45px] flex-col overflow-hidden rounded-[3px] bg-white font-['DejaVu_Sans',sans-serif] text-[27px] leading-[44px] text-black">
          <button type="button" aria-label="Zoom in" className="h-[45px] border-b border-[#cccccc]">
            +
          </button>
          <button type="button" aria-label="Zoom out" className="h-[45px]">
            −
          </button>
        </div>
        <div className="absolute top-[15px] left-[105px] flex gap-3">
          {MODES.map((m) => (
            <button
              key={m}
              type="button"
              onClick={() => setMode(m)}
              className={
                m === mode
                  ? "h-[73px] rounded-[6px] bg-[#e91e63] px-[19px] text-[30px] text-white"
                  : "h-[73px] rounded-[6px] bg-[#cccccc] px-[19px] text-[30px] text-white"
              }
            >
              {m}
            </button>
          ))}
        </div>
        <div className="absolute right-0 bottom-0 flex h-[23px] items-center bg-white/80 px-2 font-['Liberation_Sans',sans-serif] text-[17px] text-[#333333]">
          <svg viewBox="0 0 16 11" className="mr-[5px] h-[11px] w-4" aria-hidden="true">
            <path d="M0 0h16v6H0z" fill="#4c7be1" />
            <path d="M0 6h16v5H0z" fill="#ffd500" />
          </svg>
          <p className="whitespace-nowrap">
            <a href="#leaflet" className="text-[#0078a8]">
              Leaflet
            </a>{" "}
            | ©{" "}
            <a href="#carto" className="text-[#0078a8]">
              Carto
            </a>{" "}
            contributors
          </p>
        </div>
      </div>
    </section>
  );
}

export default function App() {
  return (
    <div className="flex min-h-screen items-start border-t border-[#4a78b5] bg-[#f0f2f5] font-['Roboto',sans-serif] text-[#344767]">
      <Sidebar />
      <main className="min-w-0 flex-1 pt-[29px] pr-[54px] pl-[72px]">
        <header className="mb-12 flex h-[66px] items-start justify-between px-3">
          <div className="pt-[6px]">
            <nav aria-label="Breadcrumb" className="flex h-9 items-center text-[21px]">
              <a href="#home" aria-label="Home" className="text-[#949bb1]">
                <MdHome size={24} />
              </a>
              <span className="w-[34px] text-center text-[#6c757d]">/</span>
              <span>Dashboard</span>
            </nav>
            <h1 className="text-[24px] leading-[36px] font-bold">Dashboard</h1>
          </div>
          <input
            type="text"
            aria-label="Write your prompt"
            placeholder="Write your prompt"
            className="h-[66px] w-[750px] rounded-[9px] border border-[#d2d6da] bg-transparent px-5 text-[21px] outline-none placeholder:text-[#7b809a]"
          />
        </header>
        <div className="grid grid-cols-12 items-start gap-9">
          <div className="col-span-4 flex flex-col gap-[18px]">
            <ListCard title="Vehicles" items={VEHICLES} thumb="h-[95px] bg-[#c1c1c1]" />
            <ListCard title="Customers" items={CUSTOMERS} thumb="h-[84px] bg-[#c1c1c1]" />
          </div>
          <div className="col-span-8">
            <MapCard />
          </div>
        </div>
      </main>
    </div>
  );
}
